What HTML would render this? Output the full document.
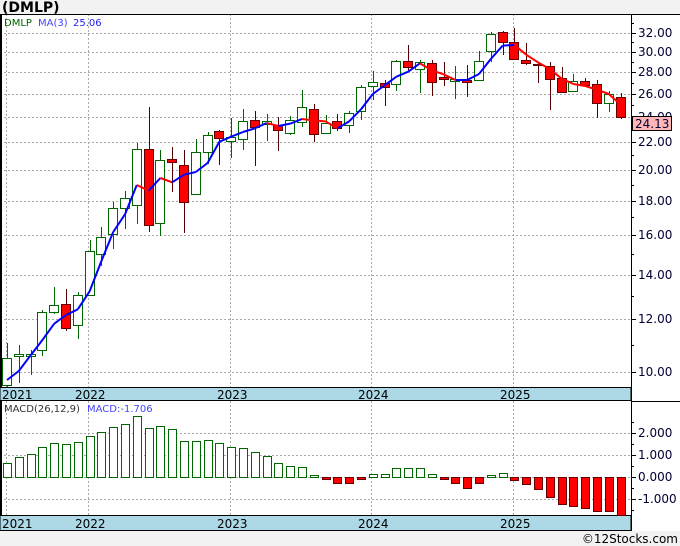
<!DOCTYPE html>
<html><head><meta charset="utf-8"><style>
html,body{margin:0;padding:0;background:#fff;width:680px;height:546px;overflow:hidden;font-family:"DejaVu Sans","Liberation Sans",sans-serif}
svg{display:block}
</style></head><body>
<svg id="s" width="680" height="546" xmlns="http://www.w3.org/2000/svg" font-family="DejaVu Sans, Liberation Sans, sans-serif">
<rect x="0" y="0" width="680" height="546" fill="#fff"/>
<rect x="0" y="0" width="680" height="14" fill="#f2f2f2"/>
<text x="2" y="12" font-size="14" font-weight="bold" fill="#000">(DMLP)</text>
<rect x="0" y="531" width="680" height="15" fill="#f2f2f2"/>
<text x="678" y="543" font-size="12" text-anchor="end" fill="#000">©12Stocks.com</text>
<g id="g"></g>
</svg>
<script>
var g=document.getElementById('g'),h='';
function L(x1,y1,x2,y2,c,w,d){h+='<line x1="'+x1+'" y1="'+y1+'" x2="'+x2+'" y2="'+y2+'" stroke="'+c+'" stroke-width="'+(w||1)+'"'+(d?' stroke-dasharray="2,2"':'')+'/>';}
function R(x,y,w,hh,f,s){h+='<rect x="'+x+'" y="'+y+'" width="'+w+'" height="'+hh+'" fill="'+f+'" stroke="'+(s||'none')+'"/>';}
function T(x,y,t,c,s,a){h+='<text x="'+x+'" y="'+y+'" font-size="'+(s||11)+'" fill="'+(c||'#000')+'"'+(a?' text-anchor="'+a+'"':'')+'>'+t+'</text>';}
// grid price
var pl=[[32,33],[30,52],[28,72],[26,94],[24,117],[22,142],[20,170],[18,201],[16,235],[14,275],[12,319],[10,372]];
pl.forEach(function(p){L(0,p[1]+.5,631,p[1]+.5,'#aaa',1,1);L(631,p[1]+.5,636,p[1]+.5,'#000');T(638,p[1]+4,p[0].toFixed(2),'#000033',12);});
[23,42,62,83,105,129,155,185,217,254,296,345].forEach(function(y){L(631,y+.5,634,y+.5,'#000');});
var yx=[6,88,230,371,513];
yx.forEach(function(x){L(x+.5,14,x+.5,387,'#aaa',1,1);L(x+.5,401,x+.5,515,'#aaa',1,1);});
[433,455,477,499].forEach(function(y,i){L(0,y+.5,631,y+.5,'#aaa',1,1);L(631,y+.5,636,y+.5,'#000');T(638,y+4,['2.000','1.000','0.000','-1.000'][i],'#000033',12);});
[422,444,466,488,510].forEach(function(y){L(631,y+.5,634,y+.5,'#000');});
// candles: [bodyTop, bodyBot, wickTop, wickBot, up]
var C=[[358,385,343,387,1],[354,356,345,383,1],[354,356,350,375,1],[312,350,310,356,1],[305,312,287,314,1],[304,328,289,331,0],[295,325,292,339,1],[251,295,240,295,1],[237,254,227,266,1],[208,234,202,249,1],[198,208,191,229,1],[149,205,143,224,1],[149,225,107,232,0],[160,223,150,236,1],[159,162,147,192,0],[165,202,150,233,0],[152,194,139,194,1],[135,152,132,164,1],[131,138,130,165,0],[137,141,118,158,1],[121,139,109,150,1],[120,127,111,166,0],[121,124,114,141,1],[125,130,117,151,0],[120,133,116,135,1],[107,122,90,127,1],[109,134,104,142,0],[123,133,115,134,1],[121,128,114,131,0],[113,125,111,133,1],[87,111,85,120,1],[82,86,71,100,1],[83,87,80,106,0],[61,84,60,91,1],[61,67,45,71,0],[62,69,60,93,1],[63,82,60,96,0],[77,79,62,86,0],[79,81,66,99,1],[80,82,65,97,0],[61,80,51,81,1],[34,51,32,62,1],[32,42,31,55,0],[42,59,28,60,0],[60,63,43,65,0],[64,65,63,83,0],[66,79,62,110,0],[78,92,67,93,0],[81,91,74,92,1],[81,85,78,86,0],[84,103,80,118,0],[94,103,91,112,1],[97,117,93,119,0]];
var cl=[];
C.forEach(function(c,i){var x=Math.round(7+11.8*i);var up=c[4];
L(x+.5,c[2],x+.5,c[3],up?'#006600':'#550000');
R(x-4.5,c[0]+.5,9,Math.max(c[1]-c[0],1),up?'#fff':'#ff0000',up?'#006600':'#660000');
cl.push(up?c[0]:c[1]);});
// MA
var ma=[];for(var i=0;i<C.length;i++){var a=cl[Math.max(0,i-2)],b=cl[Math.max(0,i-1)];ma.push((a+b+cl[i])/3);}
ma[0]=380;ma[1]=371;
for(var i=1;i<ma.length;i++){var x1=7+11.8*(i-1),x2=7+11.8*i;L(x1,ma[i-1],x2,ma[i],ma[i]<=ma[i-1]?'#0000ff':'#ff0000',2);}
// frames
L(0,14.5,680,14.5,'#000');L(1,14,1,531,'#000',2);L(631.5,14,631.5,531,'#000');
R(0,387.5,631,13,'#add8e6','#000');R(0,515.5,631,15,'#add8e6','#000');
L(631,401.5,680,401.5,'#000');L(0,530.5,631,530.5,'#000');
['2021','2022','2023','2024','2025'].forEach(function(t,i){T(i==0?2:yx[i]-13,399,t,'#000',12);T(i==0?2:yx[i]-13,528,t,'#000',12);});
// MACD
var M=[463,457,454,447,443,444,442,436,432,427,424,416,428,426,429,441,441,440,443,447,448,452,456,463,466,467,475,479,483,483,479,474,474,468,468,468,474,479,483,488,483,475,473,480,484,489,497,504,506,508,511,511,515];
M.forEach(function(v,i){var x=Math.round(7+11.8*i);if(v<477)R(x-3.5,v+.5,8,477-v,'#fff','#006600');else R(x-3.5,477.5,8,Math.max(v-477,1),'#ff0000','#660000');});
T(4,412,'MACD(26,12,9)','#333',10);T(87,412,'MACD:-1.706','#4444ff',10);
T(4,26,'DMLP','#006600',10);T(38,26,'MA(3)','#4444ff',10);T(73,26,'25.06','#2222ee',10);
R(632.5,116.5,39,14,'#ffb6b6','#000');T(635,128,'24.13','#000033',12);
g.innerHTML=h;
</script>
</body></html>
